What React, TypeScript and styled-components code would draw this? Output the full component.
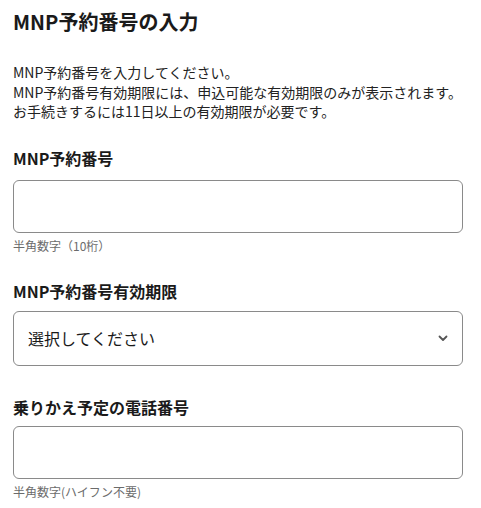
import React from "react";
import styled, { createGlobalStyle } from "styled-components";

const Global = createGlobalStyle`
  html, body { margin: 0; padding: 0; background: #ffffff; }
  body {
    font-family: "Noto Sans CJK JP", "Noto Sans", sans-serif;
    color: #1a1a1a;
  }
`;

const Page = styled.div`
  padding: 7px 18px 0 13px;
  display: flex;
  flex-direction: column;
`;

const Title = styled.h1`
  margin: 0;
  font-size: 20px;
  line-height: 30px;
  font-weight: 700;
  color: #1a1a1a;
`;

const Lead = styled.p`
  margin: 26px 0 0;
  font-size: 14px;
  line-height: 19.6px;
  color: #222;
`;

const Field = styled.div<{ $top: number }>`
  margin-top: ${(p) => p.$top}px;
  display: flex;
  flex-direction: column;
`;

const Label = styled.label<{ $gap: number }>`
  font-size: 16px;
  line-height: 24px;
  font-weight: 700;
  color: #1a1a1a;
  margin-bottom: ${(p) => p.$gap}px;
`;

const TextInput = styled.input`
  box-sizing: border-box;
  width: 100%;
  height: 53px;
  border: 1px solid #8a8a8a;
  border-radius: 6px;
  background: #fff;
  padding: 0 14px;
  font-family: inherit;
  font-size: 16px;
  outline: none;
`;

const SelectBox = styled.div`
  box-sizing: border-box;
  width: 100%;
  height: 55px;
  border: 1px solid #8a8a8a;
  border-radius: 6px;
  background: #fff;
  padding: 0 13px 0 14px;
  display: flex;
  align-items: center;
  justify-content: space-between;
  font-size: 16px;
  color: #1a1a1a;
`;

const Chevron = styled.svg`
  width: 12px;
  height: 12px;
  color: #555;
`;

const Help = styled.div`
  margin-top: 4px;
  font-size: 12px;
  line-height: 18px;
  color: #6b6b6b;
`;

export default function App() {
  return (
    <>
      <Global />
      <Page>
        <Title>MNP予約番号の入力</Title>
        <Lead>
          MNP予約番号を入力してください。
          <br />
          MNP予約番号有効期限には、申込可能な有効期限のみが表示されます。
          <br />
          お手続きするには11日以上の有効期限が必要です。
        </Lead>

        <Field $top={24}>
          <Label $gap={10}>MNP予約番号</Label>
          <TextInput />
          <Help>半角数字（10桁）</Help>
        </Field>

        <Field $top={24}>
          <Label $gap={8}>MNP予約番号有効期限</Label>
          <SelectBox>
            <span>選択してください</span>
            <Chevron viewBox="0 0 12 12" fill="none">
              <path d="M2.5 4.5 L6 8 L9.5 4.5" stroke="currentColor" strokeWidth="1.8" strokeLinecap="round" strokeLinejoin="round" />
            </Chevron>
          </SelectBox>
        </Field>

        <Field $top={29}>
          <Label $gap={7}>乗りかえ予定の電話番号</Label>
          <TextInput />
          <Help>半角数字(ハイフン不要)</Help>
        </Field>
      </Page>
    </>
  );
}
